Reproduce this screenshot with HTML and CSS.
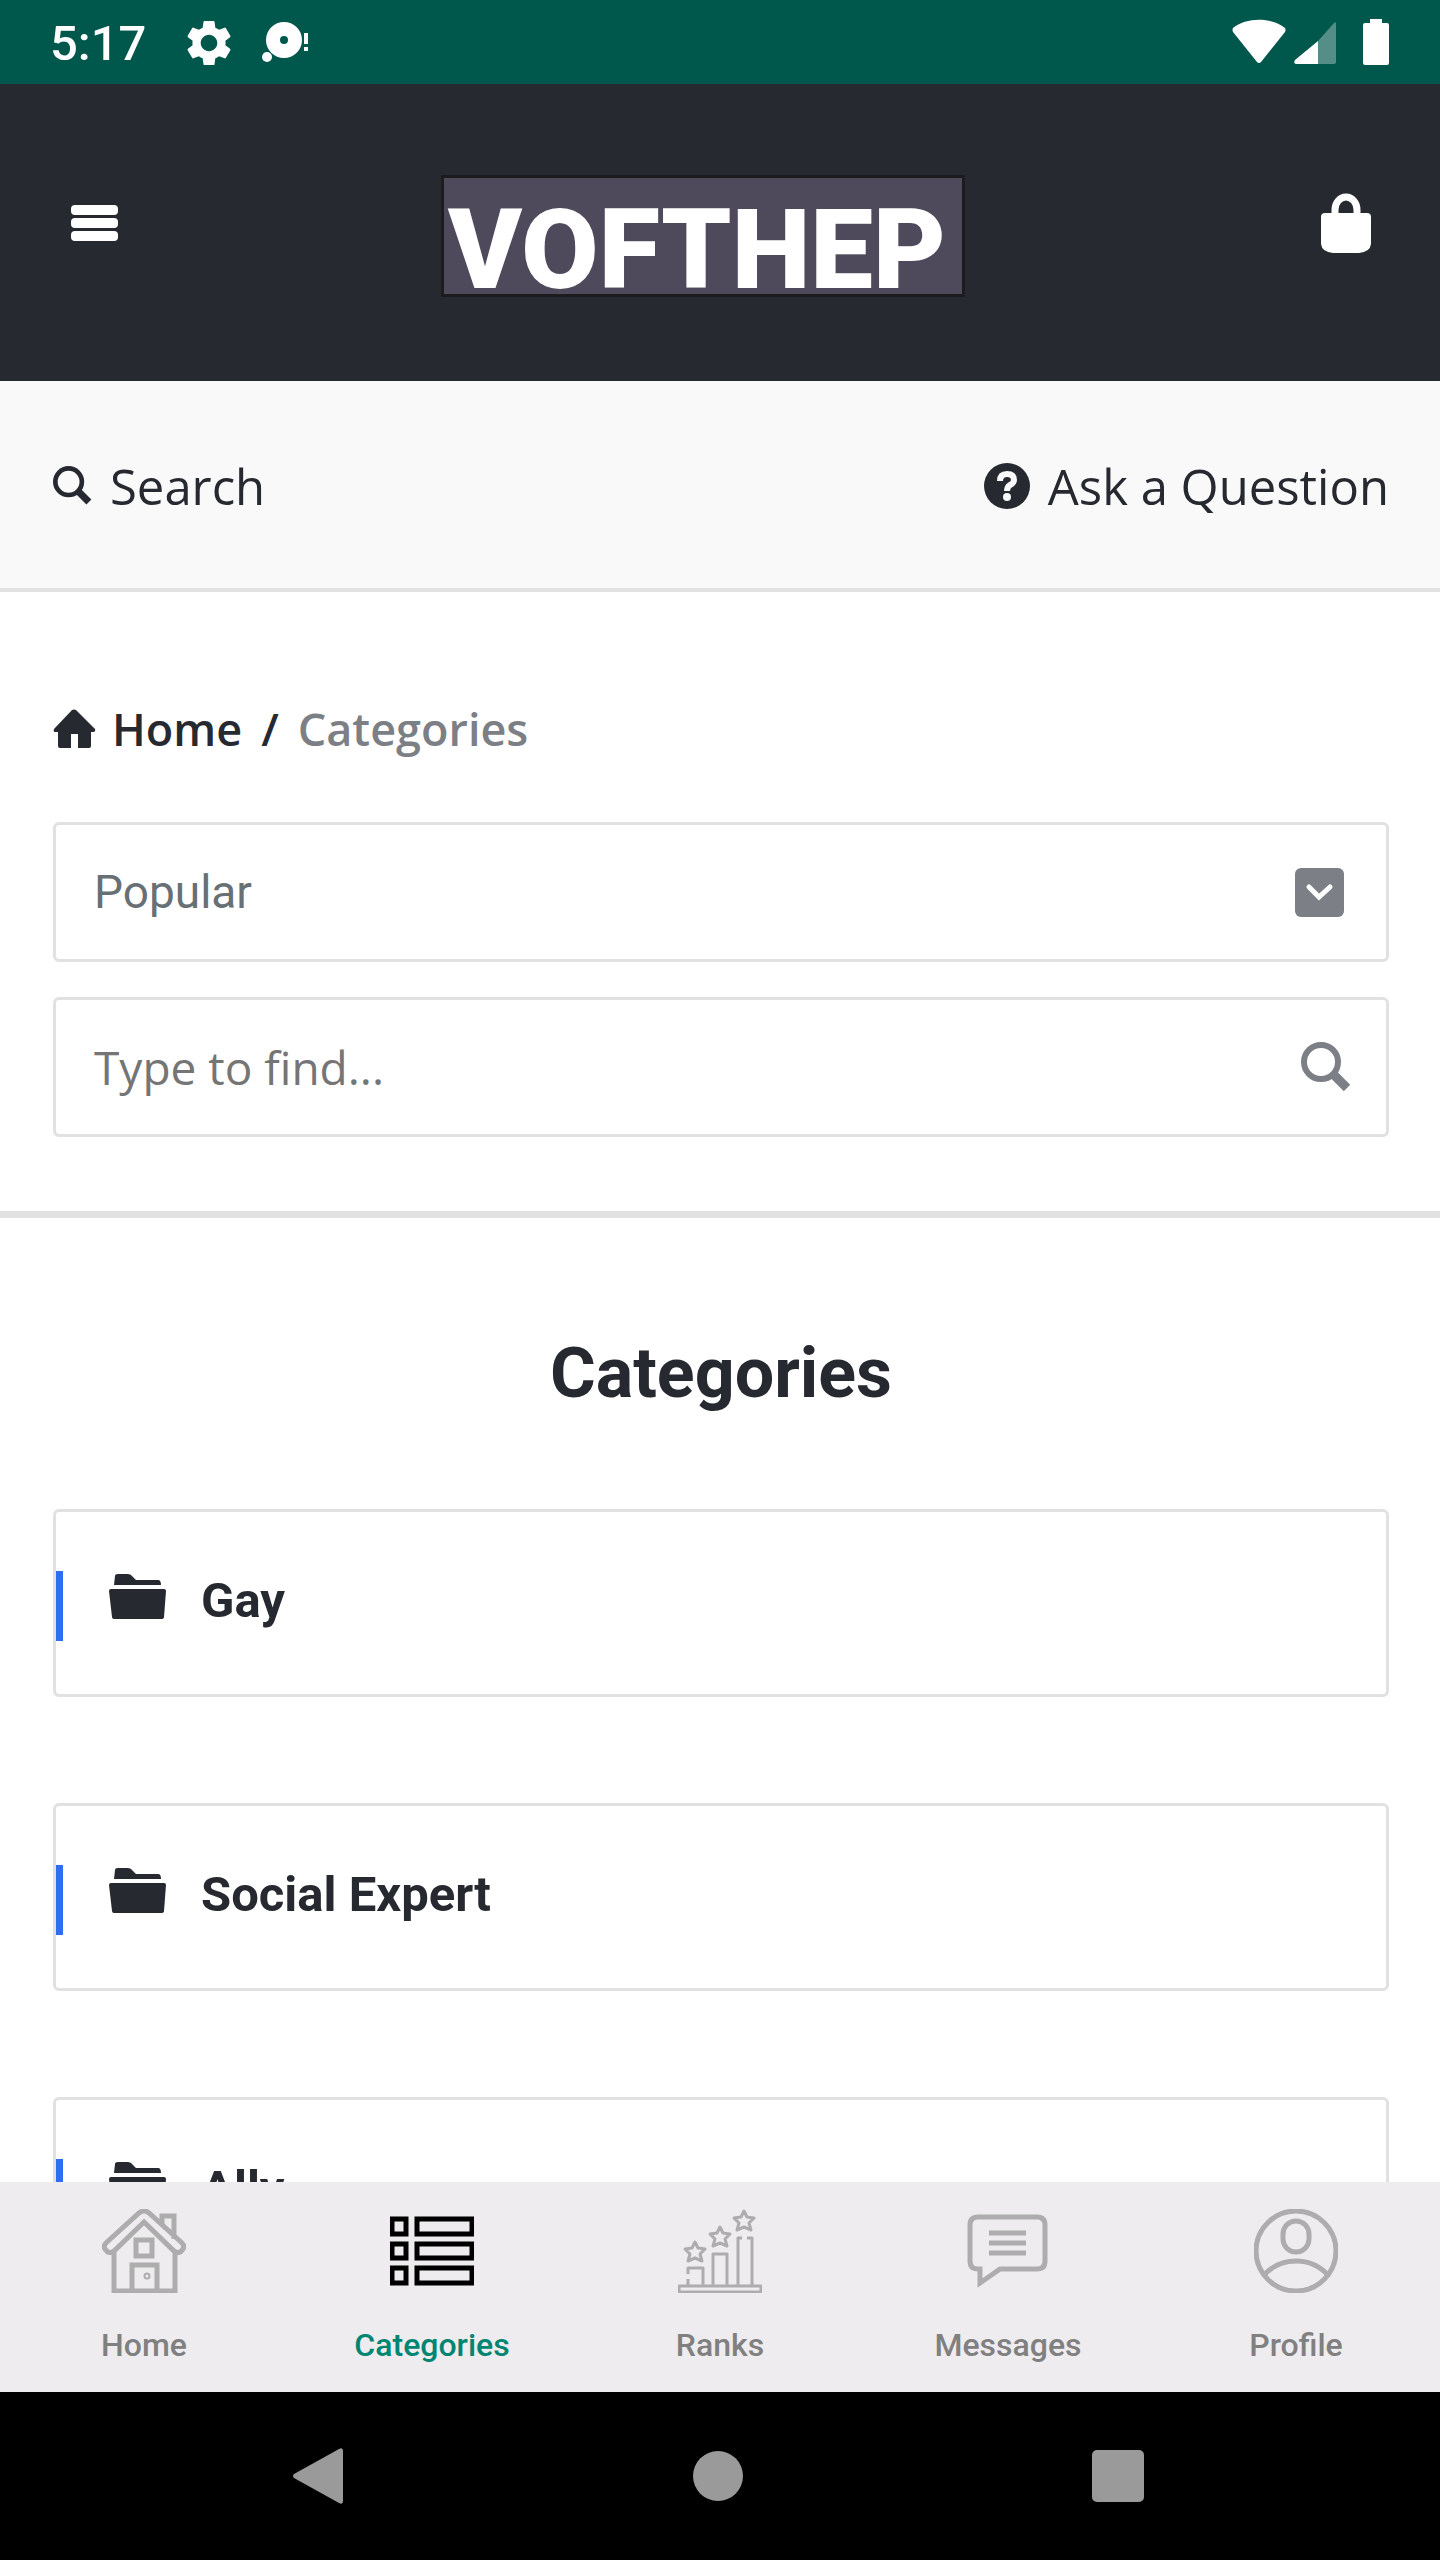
FILE: index.html
```html
<!DOCTYPE html>
<html lang="en">
<head>
    <meta charset="UTF-8">
    <meta name="viewport" content="width=device-width, initial-scale=1.0">
    <title>Categories - VOFTHEP</title>
    <link rel="stylesheet" href="styles.css">
</head>
<body>
    <!-- Status bar -->
    <div class="status-bar">
        <span class="status-time">5:17</span>
        <svg class="status-gear" width="46" height="46" viewBox="2 2 20 20" fill="#fff" aria-hidden="true"><path d="M19.14 12.94c.04-.3.06-.61.06-.94 0-.32-.02-.64-.07-.94l2.03-1.58c.18-.14.23-.41.12-.61l-1.92-3.32c-.12-.22-.37-.29-.59-.22l-2.39.96c-.5-.38-1.03-.7-1.62-.94l-.36-2.54c-.04-.24-.24-.41-.48-.41h-3.84c-.24 0-.43.17-.47.41l-.36 2.54c-.59.24-1.13.57-1.62.94l-2.39-.96c-.22-.08-.47 0-.59.22L2.74 8.87c-.12.21-.08.47.12.61l2.03 1.58c-.05.3-.09.63-.09.94s.02.64.07.94l-2.03 1.58c-.18.14-.23.41-.12.61l1.92 3.32c.12.22.37.29.59.22l2.39-.96c.5.38 1.03.7 1.62.94l.36 2.54c.05.24.24.41.48.41h3.84c.24 0 .44-.17.47-.41l.36-2.54c.59-.24 1.13-.56 1.62-.94l2.39.96c.22.08.47 0 .59-.22l1.92-3.32c.12-.22.07-.47-.12-.61l-2.01-1.58zM12 15.6c-1.98 0-3.6-1.62-3.6-3.6s1.62-3.6 3.6-3.6 3.6 1.62 3.6 3.6-1.62 3.6-3.6 3.6z"/></svg>
        <svg class="status-alert" width="48" height="46" viewBox="0 0 48 46" fill="#fff" aria-hidden="true"><path fill-rule="evenodd" d="M22 2a18 18 0 1 0 0 36a18 18 0 1 0 0-36zM22 16a4 4 0 1 1 0 8a4 4 0 1 1 0-8z"/><circle cx="5" cy="37" r="5"/><path d="M42 13h4v11h-4zM42 27h4v4h-4z"/></svg>
        <svg class="status-signal" width="158" height="48" viewBox="0 0 158 48" fill="#fff" aria-hidden="true">
            <path d="M1 9C14-2 40-2 53 9Q54 11 53 13L29 43Q27 45 25 43L1 13Q0 11 1 9z"/>
            <path d="M102 4Q104 2 104 5V43Q104 45 102 45H86V22z" opacity=".33"/>
            <path d="M86 22V45H64Q61 44 63 41z"/>
            <path d="M138 0h12v4h5q2 0 2 2v38q0 2-2 2h-22q-2 0-2-2V6q0-2 2-2h5z"/>
        </svg>
    </div>

    <!-- Header -->
    <header class="header">
        <button class="icon-button" type="button" aria-label="Menu">
            <svg width="47" height="36" viewBox="0 0 47 36" fill="#fff"><rect width="47" height="10" rx="4"/><rect y="13" width="47" height="10" rx="4"/><rect y="26" width="47" height="10" rx="4"/></svg>
        </button>
        <a class="logo" href="#">VOFTHEP</a>
        <button class="icon-button" type="button" aria-label="Sign in">
            <svg width="50" height="60" viewBox="0 0 50 60"><path d="M14 24V17A11 13 0 0 1 36 17V24" fill="none" stroke="#fff" stroke-width="7"/><path d="M4 20H46Q50 20 50 24V51Q49 59 38 60H12Q1 59 0 51V24Q0 20 4 20z" fill="#fff"/></svg>
        </button>
    </header>

    <!-- Content -->
    <main class="content">
        <div class="toolbar">
            <a class="toolbar-link" href="#find">
                <svg width="39" height="40" viewBox="0 0 50 51"><circle cx="20" cy="20" r="17" fill="none" stroke="currentColor" stroke-width="6"/><path d="M31 31L46 46" stroke="currentColor" stroke-width="9"/></svg>
                Search
            </a>
            <a class="toolbar-link" href="#ask">
                <svg width="46" height="46" viewBox="0 0 46 46"><circle cx="23" cy="23" r="23" fill="currentColor"/><path d="M16 18Q16 11 23 11Q30 11 30 17Q30 20 26 22Q23 24 23 28" fill="none" stroke="#f9f9f9" stroke-width="6"/><circle cx="23" cy="34" r="4" fill="#f9f9f9"/></svg>
                Ask a Question
            </a>
        </div>

        <section class="filters">
            <nav class="breadcrumb">
                <a href="#home">
                    <svg width="43" height="40" viewBox="0 0 43 40" fill="currentColor" aria-hidden="true"><path d="M19 1Q21 0 23 1L42 20Q43 23 40 23H38V37Q38 39 36 39H25V25H18V39H7Q5 39 5 37V23H2Q0 23 1 20z"/></svg>
                    Home
                </a>
                <span>/</span>
                <span class="current">Categories</span>
            </nav>
            <form class="filter-form">
                <div class="field">
                    <select aria-label="Sort categories">
                        <option>Popular</option>
                    </select>
                    <svg class="select-arrow" width="49" height="49" viewBox="0 0 49 49" aria-hidden="true"><rect width="49" height="49" rx="6" fill="#7c7f85"/><path d="M14 19L24 29L35 19" fill="none" stroke="#fff" stroke-width="5" stroke-linecap="round"/></svg>
                </div>
                <div class="field">
                    <input id="find" type="text" placeholder="Type to find..." aria-label="Type to find">
                    <button class="icon-button" type="submit" aria-label="Find">
                        <svg width="50" height="51" viewBox="0 0 50 51"><circle cx="20" cy="20" r="17" fill="none" stroke="#7c7f85" stroke-width="6"/><path d="M32 32L46 46" stroke="#7c7f85" stroke-width="9"/></svg>
                    </button>
                </div>
            </form>
        </section>

        <section class="categories">
            <h1>Categories</h1>
            <a class="card" href="#">
                <svg width="57" height="52" viewBox="0 0 57 52" fill="currentColor" aria-hidden="true"><path d="M5 11L6 2Q6 0 9 0H19Q22 0 24 3L27 6H49Q52 6 52 11zM2 15H55Q57 15 57 17L55 43Q55 45 52 45H5Q3 45 3 43L0 17Q0 15 2 15z"/></svg>
                Gay
            </a>
            <a class="card" href="#">
                <svg width="57" height="52" viewBox="0 0 57 52" fill="currentColor" aria-hidden="true"><path d="M5 11L6 2Q6 0 9 0H19Q22 0 24 3L27 6H49Q52 6 52 11zM2 15H55Q57 15 57 17L55 43Q55 45 52 45H5Q3 45 3 43L0 17Q0 15 2 15z"/></svg>
                Social Expert
            </a>
            <a class="card" href="#">
                <svg width="57" height="52" viewBox="0 0 57 52" fill="currentColor" aria-hidden="true"><path d="M5 11L6 2Q6 0 9 0H19Q22 0 24 3L27 6H49Q52 6 52 11zM2 15H55Q57 15 57 17L55 43Q55 45 52 45H5Q3 45 3 43L0 17Q0 15 2 15z"/></svg>
                Ally
            </a>
        </section>
    </main>

    <!-- Tabs -->
    <nav class="tabs">
        <a href="#home">
            <svg width="84" height="84" viewBox="0 0 84 84"><path d="M60 16V7H72V30M12 43V82H73V43M34 31H50V47H34zM30 82V56H55V82M42 13L12 42Q7 46 3 40Q1 37 4 34L37 4Q42 0 47 4L80 34Q83 37 81 40Q77 46 72 42z"/><circle cx="45" cy="67" r="1"/></svg>
            Home
        </a>
        <a class="active" href="#categories">
            <svg width="84" height="84" viewBox="0 0 84 84"><path d="M2 10H16V25H2zM27 10H82V25H27zM2 35H16V49H2zM27 35H82V49H27zM2 59H16V74H2zM27 59H82V74H27z"/></svg>
            Categories
        </a>
        <a href="#ranks">
            <svg class="thin" width="84" height="84" viewBox="0 0 84 84"><path d="M1 77H83V83H1zM10 76V70M10 65V59H25V76M35 76V45H49V76M60 76V29H64M69 29H74V76"/><path id="star" d="M66 2L69 8L76 9L71 14L73 21L66 18L59 21L61 14L56 9L63 8z"/><use href="#star" x="-24" y="16"/><use href="#star" x="-49" y="31"/></svg>
            Ranks
        </a>
        <a href="#messages">
            <svg width="84" height="84" viewBox="0 0 84 84"><path d="M12 8H71Q79 8 79 16V52Q79 60 71 60H34L14 74V60H12Q4 60 4 52V16Q4 8 12 8zM23 24H60M23 34H60M23 44H60"/></svg>
            Messages
        </a>
        <a href="#profile">
            <svg width="84" height="84" viewBox="0 0 84 84"><circle cx="42" cy="42" r="40"/><rect x="29" y="12" width="26" height="31" rx="13"/><path d="M10 66Q23 52 42 52Q61 52 74 66"/></svg>
            Profile
        </a>
    </nav>

    <!-- System navigation -->
    <div class="system-nav">
        <button class="icon-button" type="button" aria-label="Back"><svg width="56" height="56" viewBox="0 0 56 56" fill="#9a9a9a"><path d="M4 26L49 1Q53-1 53 3V53Q53 57 49 55L4 30Q2 28 4 26z"/></svg></button>
        <button class="icon-button" type="button" aria-label="Home"><svg width="56" height="56" viewBox="0 0 56 56" fill="#9a9a9a"><circle cx="28" cy="28" r="25"/></svg></button>
        <button class="icon-button" type="button" aria-label="Recent apps"><svg width="56" height="56" viewBox="0 0 56 56" fill="#9a9a9a"><rect x="2" y="2" width="52" height="52" rx="5"/></svg></button>
    </div>
</body>
</html>
```

FILE: styles.css
```css
* {
    box-sizing: border-box;
}
body {
    margin: 0;
    height: 100vh;
    display: flex;
    flex-direction: column;
    overflow: hidden;
    background-color: #fff;
    color: #272930;
    font-family: "Open Sans", sans-serif;
}
a {
    color: inherit;
    text-decoration: none;
}
svg {
    display: block;
    flex: none;
}
.icon-button {
    padding: 0;
    border: 0;
    background: none;
}

/* status bar */
.status-bar {
    flex: none;
    display: flex;
    align-items: center;
    height: 84px;
    padding: 2px 50px 0;
    background-color: #00574b;
    color: #fff;
    font-family: Roboto, sans-serif;
}
.status-time {
    font-size: 49px;
    font-weight: 500;
}
.status-gear {
    margin-left: 40px;
}
.status-alert {
    margin-left: 30px;
}
.status-signal {
    margin-left: auto;
}

/* header */
.header {
    flex: none;
    display: flex;
    align-items: center;
    justify-content: space-between;
    height: 297px;
    padding: 0 69px 20px 71px;
    background-color: #272930;
}
.logo {
    height: 122px;
    width: 524px;
    margin: 27px 33px 0 0;
    padding: 0 4px;
    border: 3px solid #1d1b1e;
    background-color: #4e495b;
    color: #fff;
    font: 900 112px/144px Roboto, sans-serif;
}

/* content */
.content {
    flex: 1;
    min-height: 0;
    overflow: hidden;
}
.toolbar {
    display: flex;
    align-items: center;
    justify-content: space-between;
    height: 211px;
    padding: 3px 51px 0 53px;
    border-bottom: 4px solid #e1e1e1;
    background-color: #f9f9f9;
}
.toolbar-link {
    display: flex;
    align-items: center;
    gap: 18px;
    font-size: 49px;
    line-height: 68px;
}
.filters {
    padding: 104px 51px 74px 53px;
    border-bottom: 7px solid #e1e1e1;
}
.breadcrumb {
    display: flex;
    align-items: center;
    gap: 19px;
    margin-bottom: 60px;
    font-size: 45px;
    font-weight: 600;
    line-height: 66px;
}
.breadcrumb a {
    display: flex;
    align-items: center;
    gap: 16px;
}
.current {
    color: #7c7f85;
}
.filter-form {
    display: grid;
    gap: 35px;
}
.field {
    position: relative;
    display: flex;
    align-items: center;
    height: 140px;
    padding-right: 35px;
    border: 3px solid #e1e1e1;
    border-radius: 6px;
}
.field select,
.field input {
    flex: 1;
    min-width: 0;
    height: 100%;
    padding: 0 0 0 38px;
    border: 0;
    outline: 0;
    background: none;
    appearance: none;
    font-size: 46px;
}
.field select {
    color: #677075;
    font-family: Roboto, sans-serif;
}
.field input {
    font-family: "Open Sans", sans-serif;
}
.field input::placeholder {
    color: #757575;
}
.select-arrow {
    position: absolute;
    right: 42px;
    pointer-events: none;
}

/* category list */
.categories {
    padding: 114px 51px 0 53px;
    font-family: Roboto, sans-serif;
}
.categories h1 {
    margin: 0 0 95px;
    font-size: 70px;
    line-height: 82px;
    text-align: center;
}
.card {
    display: flex;
    align-items: center;
    height: 188px;
    margin-bottom: 106px;
    padding-bottom: 6px;
    border: 3px solid #e1e1e1;
    border-radius: 6px;
    font-size: 49px;
    font-weight: 700;
}
.card::before {
    content: "";
    width: 7px;
    height: 70px;
    margin-top: 12px;
    background-color: #2d6ff0;
}
.card svg {
    margin: 0 35px 0 46px;
}

/* tabs */
.tabs {
    flex: none;
    display: grid;
    grid-template-columns: repeat(5, 1fr);
    height: 210px;
    padding-top: 27px;
    background-color: #eeecee;
    color: #808080;
    font: 500 32px/40px Roboto, sans-serif;
}
.tabs a {
    display: flex;
    flex-direction: column;
    align-items: center;
    gap: 32px;
}
.tabs svg {
    fill: none;
    stroke: #adadad;
    stroke-width: 5;
}
.tabs .thin {
    stroke-width: 3;
    stroke-linejoin: round;
}
.tabs .active {
    color: #008573;
}
.tabs .active svg {
    stroke: #000;
}

/* system navigation */
.system-nav {
    flex: none;
    display: flex;
    align-items: center;
    justify-content: space-between;
    height: 168px;
    padding: 0 294px 0 290px;
    background-color: #000;
}
```
